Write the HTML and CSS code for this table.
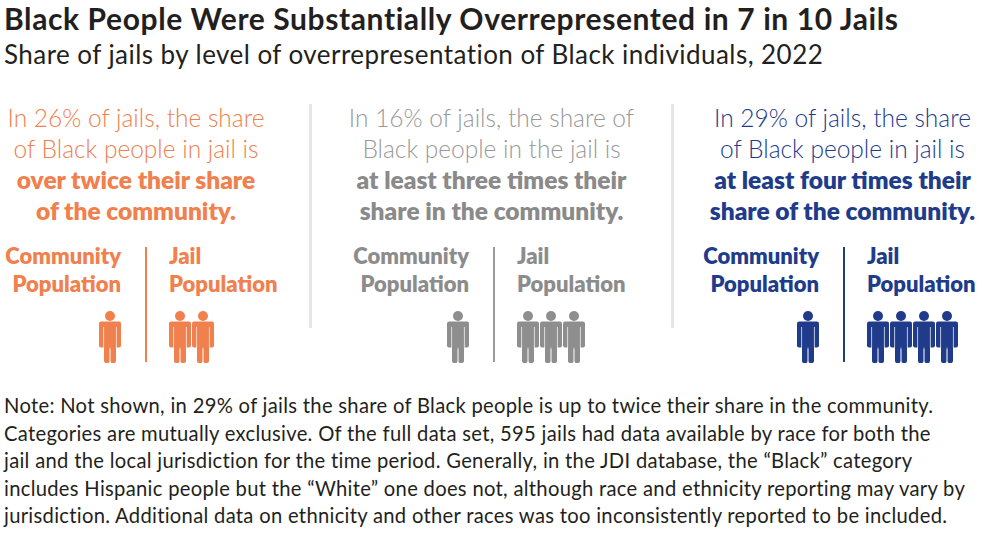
FILE: index.html
```html
<!DOCTYPE html>
<html lang="en">
<head>
<meta charset="utf-8">
<title>Black People Were Substantially Overrepresented in 7 in 10 Jails</title>
<link rel="stylesheet" href="styles.css">
</head>
<body>
<svg width="0" height="0" class="defs" aria-hidden="true">
  <defs>
    <symbol id="person" viewBox="0 0 22 52">
      <circle cx="11" cy="5" r="5" fill="currentColor"/>
      <rect x="0" y="10.5" width="22" height="26" rx="2" fill="currentColor"/>
      <rect x="5" y="28" width="5.7" height="24" rx="2.6" fill="currentColor"/>
      <rect x="11.3" y="28" width="5.7" height="24" rx="2.6" fill="currentColor"/>
      <line x1="4.6" y1="16" x2="4.6" y2="37" stroke="#fff" stroke-width="0.7"/>
      <line x1="17.4" y1="16" x2="17.4" y2="37" stroke="#fff" stroke-width="0.7"/>
      <line x1="11" y1="38" x2="11" y2="52" stroke="#fff" stroke-width="0.6"/>
    </symbol>
  </defs>
</svg>
<main class="page">
  <h1 class="title">Black People Were Substantially Overrepresented in 7 in 10 Jails</h1>
  <p class="subtitle">Share of jails by level of overrepresentation of Black individuals, 2022</p>

  <section class="cols">
    <div class="col col-orange col-1">
      <p class="statement">In 26% of jails, the share<br>of Black people in jail is<br><b>over twice their share<br>of the community.</b></p>
      <div class="pair">
        <div class="side side-left">
          <div class="label">Community<br>Population</div>
          <div class="people"><svg class="person"><use href="#person"/></svg></div>
        </div>
        <div class="pair-rule"></div>
        <div class="side side-right">
          <div class="label">Jail<br>Population</div>
          <div class="people"><svg class="person"><use href="#person"/></svg><svg class="person"><use href="#person"/></svg></div>
        </div>
      </div>
    </div>
    <div class="rule"></div>
    <div class="col col-gray col-2">
      <p class="statement">In 16% of jails, the share of<br>Black people in the jail is<br><b>at least three times their<br>share in the community.</b></p>
      <div class="pair">
        <div class="side side-left">
          <div class="label">Community<br>Population</div>
          <div class="people"><svg class="person"><use href="#person"/></svg></div>
        </div>
        <div class="pair-rule"></div>
        <div class="side side-right">
          <div class="label">Jail<br>Population</div>
          <div class="people"><svg class="person"><use href="#person"/></svg><svg class="person"><use href="#person"/></svg><svg class="person"><use href="#person"/></svg></div>
        </div>
      </div>
    </div>
    <div class="rule"></div>
    <div class="col col-blue col-3">
      <p class="statement">In 29% of jails, the share<br>of Black people in jail is<br><b>at least four times their<br>share of the community.</b></p>
      <div class="pair">
        <div class="side side-left">
          <div class="label">Community<br>Population</div>
          <div class="people"><svg class="person"><use href="#person"/></svg></div>
        </div>
        <div class="pair-rule"></div>
        <div class="side side-right">
          <div class="label">Jail<br>Population</div>
          <div class="people"><svg class="person"><use href="#person"/></svg><svg class="person"><use href="#person"/></svg><svg class="person"><use href="#person"/></svg><svg class="person"><use href="#person"/></svg></div>
        </div>
      </div>
    </div>
  </section>

  <p class="note">Note: Not shown, in 29% of jails the share of Black people is up to twice their share in the community.<br>Categories are mutually exclusive. Of the full data set, 595 jails had data available by race for both the<br>jail and the local jurisdiction for the time period. Generally, in the JDI database, the “Black” category<br>includes Hispanic people but the “White” one does not, although race and ethnicity reporting may vary by<br>jurisdiction. Additional data on ethnicity and other races was too inconsistently reported to be included.</p>
</main>
</body>
</html>
```

FILE: styles.css
```css
html, body {
  margin: 0;
  padding: 0;
  background: #ffffff;
  overflow: hidden;
}

body {
  font-family: Lato, "Open Sans", sans-serif;
  color: #222222;
}

.defs {
  position: absolute;
  width: 0;
  height: 0;
}

.page {
  width: 989px;
  height: 538px;
  box-sizing: border-box;
}

.title {
  margin: 0 0 0 4px;
  font-size: 30px;
  line-height: 36px;
  font-weight: 700;
  color: #231f20;
  letter-spacing: 0.6px;
  white-space: nowrap;
}

.subtitle {
  margin: 3px 0 0 4px;
  font-size: 26px;
  line-height: 30px;
  font-weight: 400;
  color: #231f20;
  letter-spacing: 0.45px;
  white-space: nowrap;
}

.cols {
  display: flex;
  margin-top: 35px;
}

.col {
  display: flex;
  flex-direction: column;
  box-sizing: border-box;
}

.col-1 {
  width: 309px;
  padding-right: 37px;
  --left: 145px;
}

.col-2 {
  width: 359px;
  --left: 181px;
}

.col-3 {
  flex: 1;
  padding-left: 22px;
  --left: 147px;
}

.rule {
  width: 3px;
  height: 224px;
  background: #e6e6e6;
  flex: none;
}

.statement {
  margin: -2px 0 0;
  font-size: 24.5px;
  line-height: 31px;
  font-weight: 300;
  text-align: center;
  white-space: nowrap;
}

.statement b {
  font-weight: 800;
}

.col-orange { color: #f0804d; }
.col-gray { color: #999999; }
.col-gray .statement b { color: #8a8a8a; }
.col-blue { color: #213b8b; }

.pair {
  display: grid;
  grid-template-columns: var(--left) 2px 1fr;
  margin-top: 16px;
}

.side {
  display: flex;
  flex-direction: column;
}

.side-left {
  align-items: flex-end;
  padding-right: 24px;
}

.side-right {
  align-items: flex-start;
  padding-left: 22px;
}

.label {
  font-size: 22px;
  line-height: 28px;
  font-weight: 800;
  white-space: nowrap;
}

.side-left .label {
  text-align: right;
}

.col-gray .label { color: #8c8c8c; }

.pair-rule {
  margin: 5px 0 1px;
  background: currentColor;
  width: 2px;
}

.col-gray .pair-rule { background: #9a9a9a; }

.people {
  display: flex;
  margin-top: 13px;
  gap: 1px;
}

.person {
  width: 22px;
  height: 52px;
  display: block;
}

.col-gray .person { color: #8e8e8e; }

.note {
  margin: 29px 0 0 4px;
  font-size: 20.2px;
  line-height: 27.5px;
  font-weight: 400;
  color: #231f20;
  letter-spacing: 0.3px;
  white-space: nowrap;
}
```
